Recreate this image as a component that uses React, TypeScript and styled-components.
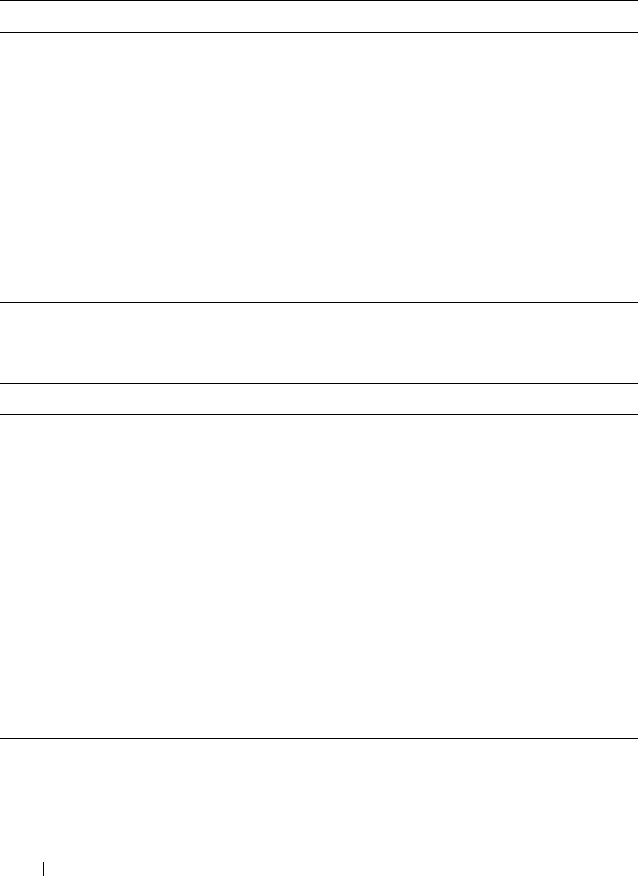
import styled, { createGlobalStyle } from "styled-components";

const GlobalStyle = createGlobalStyle`
    html, body {
        margin: 0;
        padding: 0;
        background: #ffffff;
        font-family: "Liberation Sans", Arial, sans-serif;
    }
`;

const Page = styled.div`
    width: 638px;
    display: flex;
    flex-direction: column;
`;

const Table = styled.div<{ $gapTop: number }>`
    display: flex;
    flex-direction: column;
    margin-top: ${(p) => p.$gapTop}px;
    border-top: 1px solid #000;
`;

const HeaderRow = styled.div<{ $h: number }>`
    height: ${(p) => p.$h}px;
    border-bottom: 1px solid #000;
`;

const Body = styled.div<{ $h: number }>`
    height: ${(p) => p.$h}px;
    border-bottom: 1px solid #000;
`;

const Footer = styled.div`
    display: flex;
    flex-direction: row;
    align-items: center;
    margin-top: 123px;
    padding-left: 43px;
`;

const Divider = styled.span`
    display: block;
    width: 1px;
    height: 14px;
    background: #000;
`;

const App = () => {
    return (
        <>
            <GlobalStyle />
            <Page>
                <Table $gapTop={0}>
                    <HeaderRow $h={31} />
                    <Body $h={269} />
                </Table>
                <Table $gapTop={80}>
                    <HeaderRow $h={30} />
                    <Body $h={323} />
                </Table>
                <Footer>
                    <Divider />
                </Footer>
            </Page>
        </>
    );
};

export default App;
